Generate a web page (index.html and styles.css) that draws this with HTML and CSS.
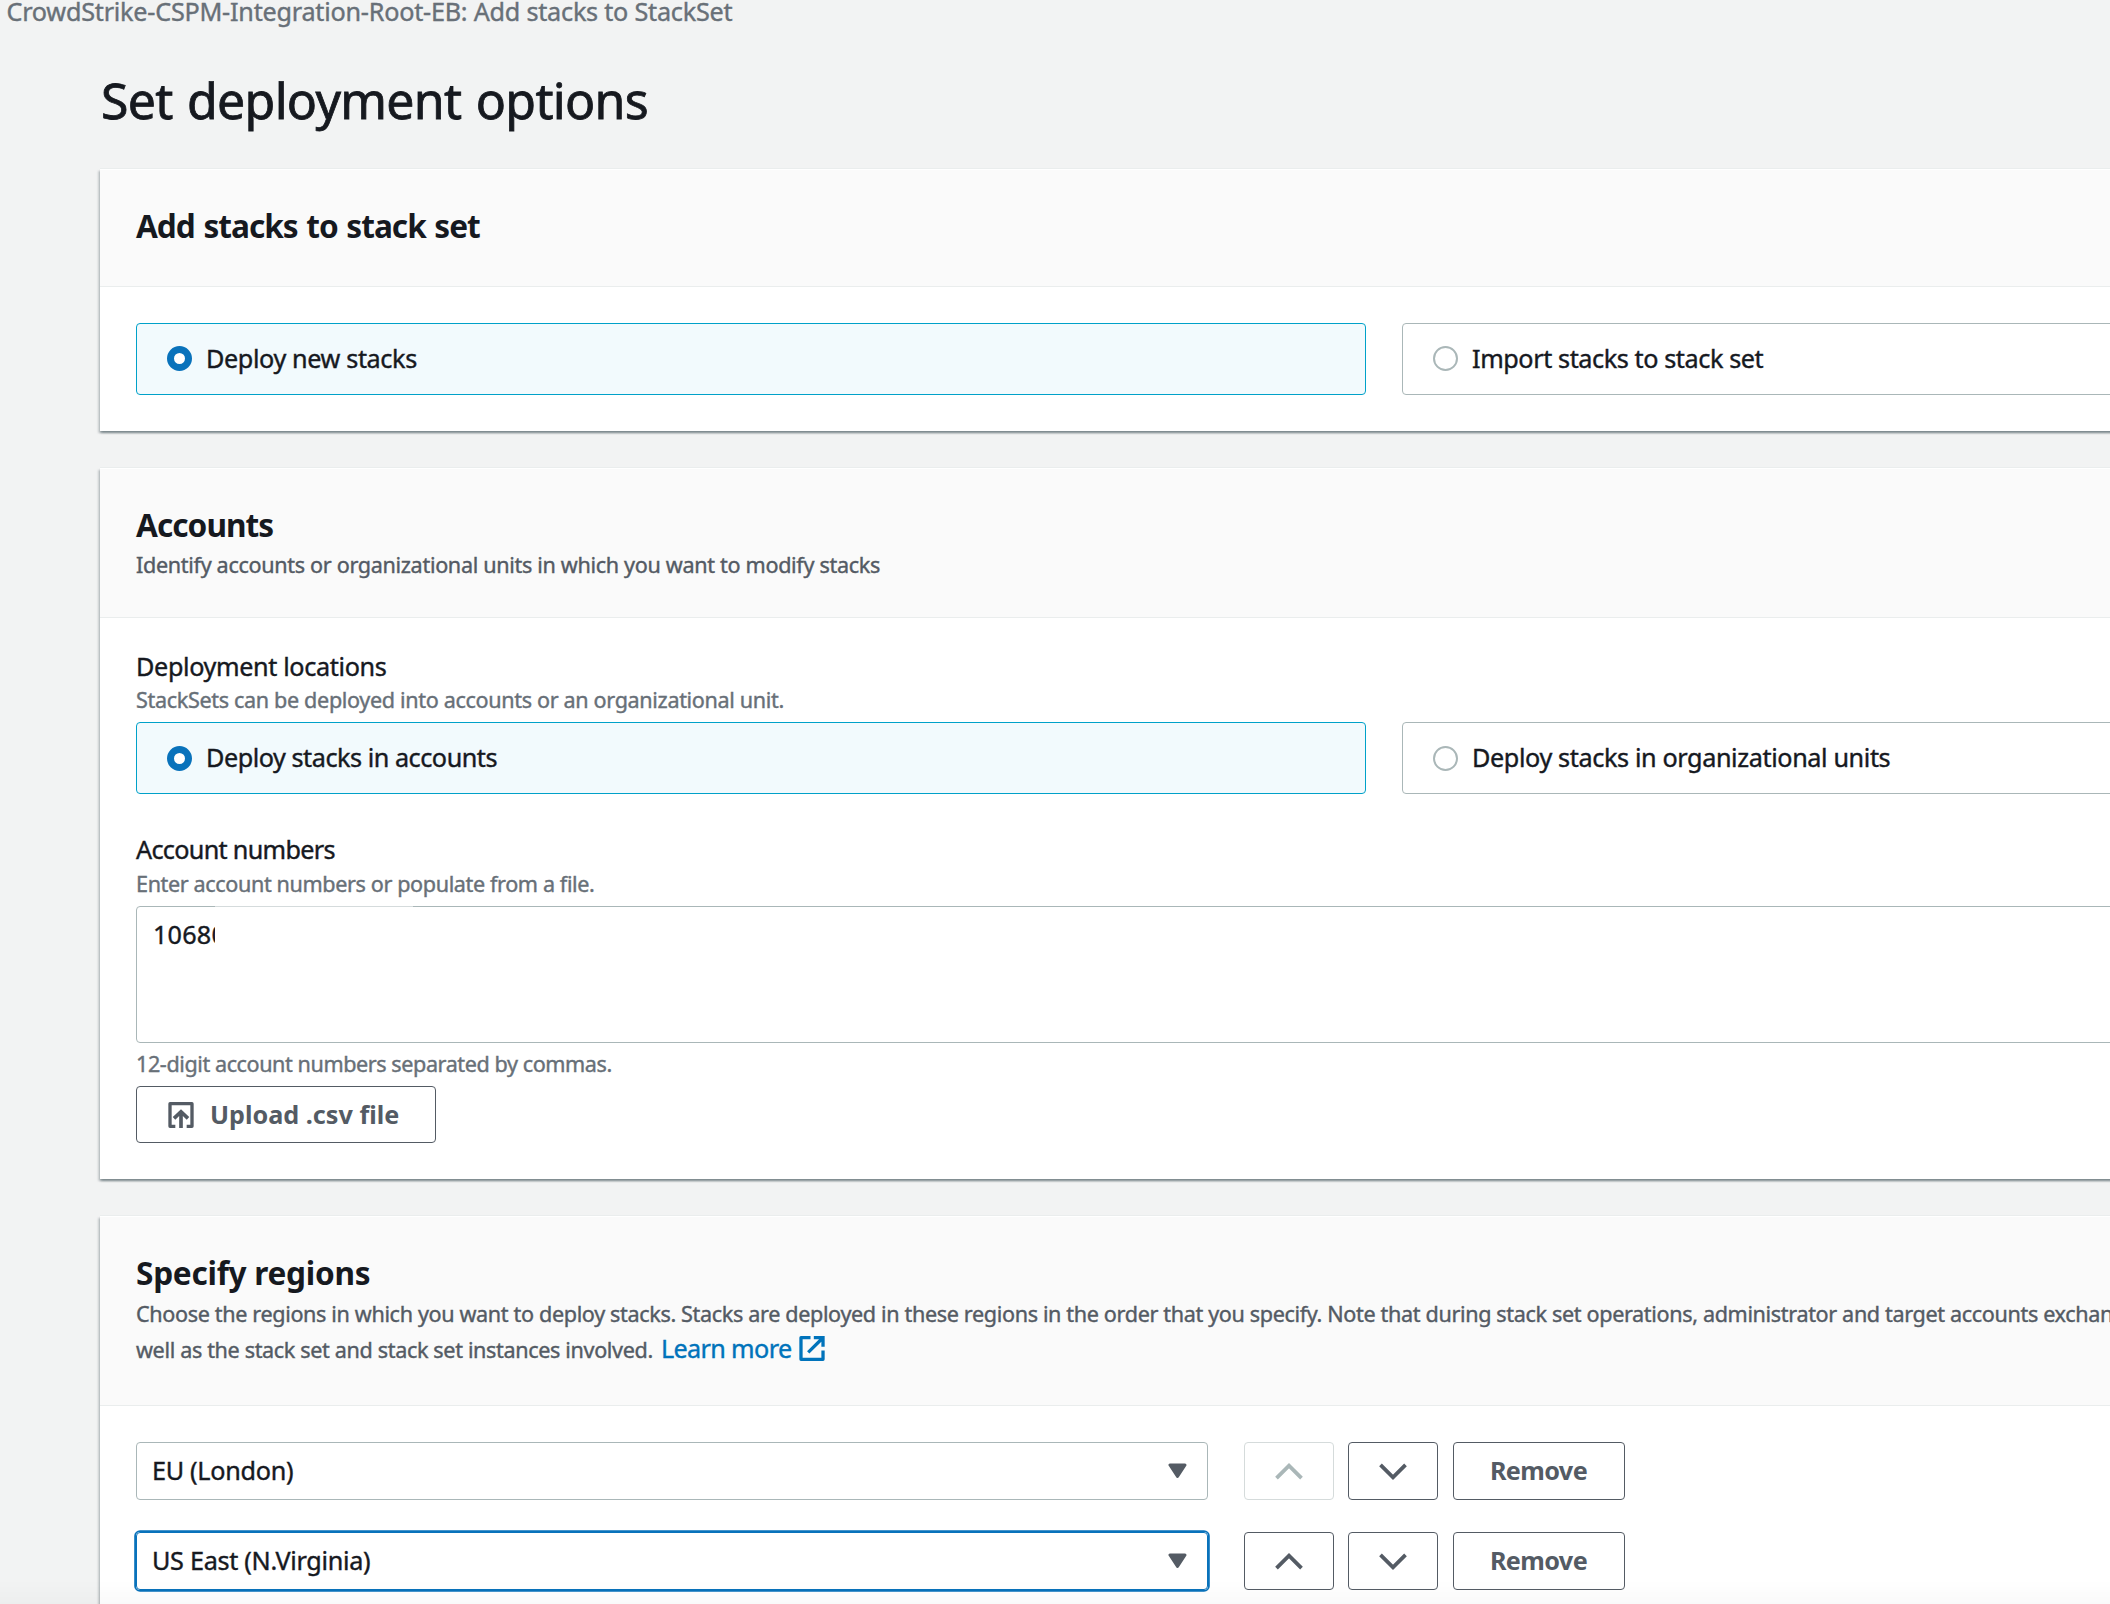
FILE: index.html
```html
<!DOCTYPE html>
<html lang="en">
<head>
<meta charset="utf-8">
<title>Set deployment options</title>
<link rel="stylesheet" href="styles.css">
</head>
<body>
<svg class="sprite" width="0" height="0" aria-hidden="true">
  <symbol id="chevron-up" viewBox="0 0 28 17"><path d="M1.5 15.2 14 2.7 26.5 15.2" fill="none" stroke="currentColor" stroke-width="3.8"/></symbol>
  <symbol id="chevron-down" viewBox="0 0 28 17"><path d="M1.5 1.8 14 14.3 26.5 1.8" fill="none" stroke="currentColor" stroke-width="3.8"/></symbol>
  <symbol id="caret" viewBox="0 0 19 16"><path d="M2 2H17L9.5 13.5Z" fill="currentColor" stroke="currentColor" stroke-width="3" stroke-linejoin="round"/></symbol>
</svg>
<nav class="breadcrumb">CrowdStrike-CSPM-Integration-Root-EB: Add stacks to StackSet</nav>
<main class="page">
  <h1 class="page-title">Set deployment options</h1>

  <section class="panel">
    <header class="panel-header">
      <h2 class="panel-title title-stacks">Add stacks to stack set</h2>
    </header>
    <div class="panel-body">
      <div class="tiles raised">
        <label class="tile selected"><span class="radio"></span><span class="tile-label">Deploy new stacks</span></label>
        <label class="tile"><span class="radio"></span><span class="tile-label import">Import stacks to stack set</span></label>
      </div>
    </div>
  </section>

  <section class="panel">
    <header class="panel-header with-text">
      <h2 class="panel-title title-accounts">Accounts</h2>
      <p class="panel-text identify">Identify accounts or organizational units in which you want to modify stacks</p>
    </header>
    <div class="panel-body accounts-body">
      <div class="field">
        <div class="label">Deployment locations</div>
        <div class="hint">StackSets can be deployed into accounts or an organizational unit.</div>
        <div class="tiles">
          <label class="tile selected"><span class="radio"></span><span class="tile-label in-accounts">Deploy stacks in accounts</span></label>
          <label class="tile"><span class="radio"></span><span class="tile-label">Deploy stacks in organizational units</span></label>
        </div>
      </div>
      <div class="field numbers">
        <div class="label">Account numbers</div>
        <div class="hint">Enter account numbers or populate from a file.</div>
        <div class="textarea">10680<span class="redaction"></span></div>
        <div class="hint constraint">12-digit account numbers separated by commas.</div>
        <button class="button upload">
          <svg class="upload-icon" viewBox="0 0 76 78" fill="none" stroke="currentColor" stroke-width="10"><path d="M21 73H5V5H71V73H55" stroke-linejoin="round"/><path d="M38 78V30M17 49 38 29 59 49" stroke-width="11"/></svg>
          <span>Upload .csv file</span>
        </button>
      </div>
    </div>
  </section>

  <section class="panel">
    <header class="panel-header regions-header">
      <h2 class="panel-title title-regions">Specify regions</h2>
      <p class="panel-text regions-text">Choose the regions in which you want to deploy stacks. Stacks are deployed in these regions in the order that you specify. Note that during stack set operations, administrator and target accounts exchange<br>well as the stack set and stack set instances involved.<a class="link">Learn more<svg class="external-icon" viewBox="0 0 77 76" fill="none" stroke="currentColor" stroke-width="10"><path d="M34 5H5V71H72V44" stroke-linejoin="round"/><path d="M44 5H72V33M27 50 71 6"/></svg></a></p>
    </header>
    <div class="panel-body regions">
      <div class="region">
        <div class="select"><span>EU (London)</span><svg class="caret"><use href="#caret"/></svg></div>
        <div class="actions">
          <button class="button move disabled"><svg class="chevron"><use href="#chevron-up"/></svg></button>
          <button class="button move"><svg class="chevron"><use href="#chevron-down"/></svg></button>
          <button class="button remove">Remove</button>
        </div>
      </div>
      <div class="region">
        <div class="select focused"><span>US East (N.Virginia)</span><svg class="caret"><use href="#caret"/></svg></div>
        <div class="actions">
          <button class="button move"><svg class="chevron"><use href="#chevron-up"/></svg></button>
          <button class="button move"><svg class="chevron"><use href="#chevron-down"/></svg></button>
          <button class="button remove">Remove</button>
        </div>
      </div>
    </div>
  </section>
</main>
<div class="bottom-shade"></div>
</body>
</html>
```
FILE: styles.css
```css
* { box-sizing: border-box; }
html { overflow: hidden; }
body {
  margin: 0;
  height: 1604px;
  overflow: hidden;
  background: #f2f3f3;
  color: #16191f;
  font-family: "Noto Sans", "Open Sans", sans-serif;
  font-size: 25.2px;
  white-space: nowrap;
  -webkit-text-stroke: 0.4px currentColor;
}
h1, h2, p { margin: 0; }
.sprite { position: absolute; }

.breadcrumb {
  padding-left: 6.5px;
  line-height: 22px;
  letter-spacing: -0.227px;
  color: #687078;
}
.page { width: 2568px; margin-left: 100px; }
.page-title {
  margin: 48px 0 39px;
  padding-left: 1px;
  font-size: 50px;
  font-weight: 400;
  line-height: 60px;
  letter-spacing: -0.68px;
  word-spacing: 2px;
  -webkit-text-stroke-width: 0.8px;
}

.panel {
  margin-bottom: 37px;
  background: #fff;
  box-shadow: 0 -1px 0 #eaeded, 0 2px 2px rgba(0, 28, 36, .3), 2px 2px 2px rgba(0, 28, 36, .15), -2px 2px 2px rgba(0, 28, 36, .15);
}
.panel-header {
  padding: 37px 36px 40px;
  background: #fafafa;
  border-bottom: 1px solid #eaeded;
  box-shadow: inset 0 1px 0 #fff;
}
.with-text { padding-bottom: 34px; }
.regions-header { padding-bottom: 37px; }
.panel-title { font-size: 31.6px; font-weight: 700; line-height: 40px; -webkit-text-stroke-width: 0; }
.title-stacks { letter-spacing: -1px; word-spacing: 1.4px; }
.title-accounts { letter-spacing: -0.95px; }
.title-regions { letter-spacing: -0.27px; }
.panel-text { margin-top: 2px; font-size: 21.6px; line-height: 36px; color: #545b64; }
.identify { letter-spacing: -0.325px; }
.regions-text { margin-top: 3px; letter-spacing: -0.355px; }
.panel-body { padding: 36px; }
.accounts-body { padding-top: 35px; }

.tiles { display: grid; grid-template-columns: 1fr 1fr; gap: 36px; }
.tile {
  display: flex;
  align-items: center;
  gap: 14px;
  height: 72px;
  padding: 0 30px;
  border: 1px solid #aab7b8;
  border-radius: 4px;
}
.raised .tile { padding-bottom: 1px; }
.selected { background: #f2fafd; border-color: #00a1c9; }
.tile-label { margin-bottom: 2px; letter-spacing: -0.375px; }
.raised .tile-label { margin-bottom: 1px; }
.import { letter-spacing: -0.41px; }
.in-accounts { letter-spacing: -0.46px; }
.radio { width: 25px; height: 25px; border: 2px solid #aab7b8; border-radius: 50%; background: #fff; }
.selected .radio { border: 7.4px solid #0972bb; }

.label { line-height: 26px; letter-spacing: -0.355px; }
.hint {
  margin: 6px 0 7px;
  font-size: 21.6px;
  line-height: 30px;
  letter-spacing: -0.344px;
  color: #687078;
}
.numbers { margin-top: 42px; }
.numbers .label { letter-spacing: -0.68px; }
.numbers .hint { margin-top: 7px; letter-spacing: -0.38px; }
.numbers .constraint { margin-top: 6px; letter-spacing: -0.425px; }
.textarea {
  position: relative;
  height: 137px;
  padding: 7px 16px;
  border: 1px solid #aab7b8;
  border-radius: 4px;
  line-height: 40px;
  letter-spacing: 0.2px;
}
.redaction {
  position: absolute;
  left: 78px;
  top: 0;
  width: 198px;
  height: 60px;
  background: #fff;
  box-shadow: 0 -1px 0 rgba(255, 255, 255, .5);
}

.button {
  display: flex;
  align-items: center;
  justify-content: center;
  height: 58px;
  padding: 0;
  border: 1px solid #545b64;
  border-radius: 4px;
  background: #fff;
  color: #545b64;
  font: 700 25.2px "Noto Sans", "Open Sans", sans-serif;
  -webkit-text-stroke-width: 0;
}
.upload { width: 300px; height: 57px; padding-left: 31px; justify-content: flex-start; gap: 16px; }
.upload span { margin-bottom: 2px; }
.upload-icon { width: 26px; height: 26px; }
.link { margin-left: 8px; font-size: 25.2px; line-height: 1; letter-spacing: -0.638px; color: #0073bb; }
.external-icon { width: 26px; height: 25px; margin-left: 8px; vertical-align: -3px; }

.regions { display: grid; gap: 32px; }
.region { display: flex; gap: 36px; }
.select {
  display: flex;
  align-items: center;
  justify-content: space-between;
  width: 1072px;
  height: 58px;
  padding: 0 20px 1px 15px;
  border: 1px solid #aab7b8;
  border-radius: 4px;
  letter-spacing: -0.29px;
}
.select span { margin-bottom: 1px; }
.focused { border-color: #0972bb; box-shadow: 0 0 0 1.8px #0972bb; }
.caret { width: 19px; height: 16px; color: #545b64; }
.actions { display: flex; gap: 14px; }
.move { width: 90px; }
.chevron { width: 28px; height: 17px; }
.disabled { border-color: #d5dbdb; color: #aab7b8; }
.remove { width: 172px; margin-left: 1px; padding: 0 1px 3px 0; letter-spacing: -0.6px; }

/* soft shade cast by the window edge */
.bottom-shade {
  position: fixed;
  left: 0;
  right: 0;
  bottom: 0;
  height: 24px;
  background: linear-gradient(transparent, rgba(0, 0, 0, .02));
}
```
